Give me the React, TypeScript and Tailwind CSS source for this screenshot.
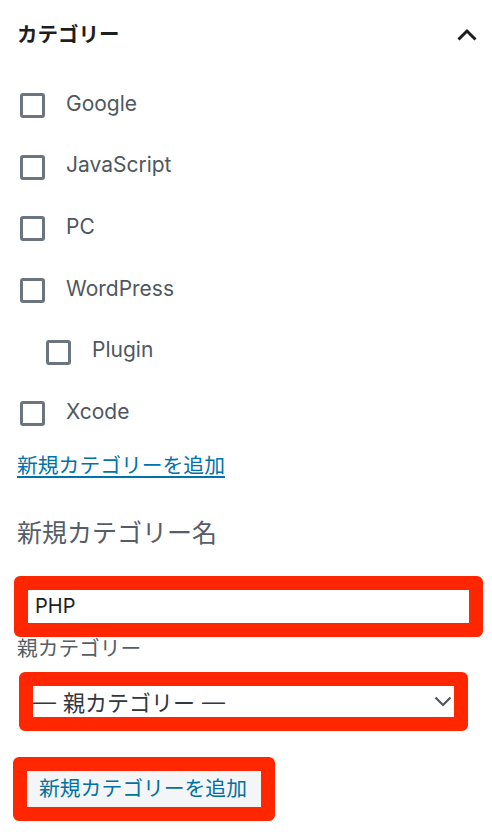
import React from 'react';

const categories = [
  { name: 'Google', child: false },
  { name: 'JavaScript', child: false },
  { name: 'PC', child: false },
  { name: 'WordPress', child: false },
  { name: 'Plugin', child: true },
  { name: 'Xcode', child: false },
];

const font = { fontFamily: 'Inter, "Noto Sans CJK JP", sans-serif' };
const cjk = { fontFamily: '"Noto Sans CJK JP", sans-serif' };
const dash = { fontFamily: '"Liberation Sans", sans-serif' };

export default function App() {
  return (
    <div className="w-[492px] h-[834px] bg-white overflow-hidden" style={font}>
      {/* Panel header */}
      <div className="h-[70px] flex items-center justify-between pl-[17px] pr-[14px]">
        <h2 className="text-[20.5px] leading-[28px] font-bold text-[#1e1e1e]">カテゴリー</h2>
        <svg width="22" height="14" viewBox="0 0 22 14" fill="none">
          <path d="M2.5 11.5 L11 3 L19.5 11.5" stroke="#1e1e1e" strokeWidth="3" />
        </svg>
      </div>

      {/* Category checklist */}
      <ul className="mt-[5px]">
        {categories.map((c) => (
          <li
            key={c.name}
            className={`h-[61.6px] flex items-center ${c.child ? 'pl-[46px]' : 'pl-[20px]'}`}
          >
            <span className="w-[25px] h-[25px] border-[3px] border-[#6c7480] rounded-[3px] shrink-0" />
            <span className="ml-[21px] -mt-[4px] text-[21px] leading-[28px] text-[#50575e]">{c.name}</span>
          </li>
        ))}
      </ul>

      <div className="pl-[17px]">
        <a className="block mt-[7px] text-[20.8px] leading-[28px] text-[#0073aa] underline underline-offset-[3px]">
          新規カテゴリーを追加
        </a>

        <h3 className="mt-[36px] text-[25px] leading-[34px] text-[#555d66]">新規カテゴリー名</h3>
      </div>

      {/* New category name */}
      <div className="mt-[26px] ml-[14px] w-[469px] border-[14px] border-[#ff2600] rounded-[6px]">
        <div className="h-[33px] bg-white flex items-center pl-[7px] text-[20px] text-[#1e1e1e]">PHP</div>
      </div>

      <div className="pl-[17px] text-[20.7px] leading-[24px] text-[#555d66]">親カテゴリー</div>

      {/* Parent category select */}
      <div className="mt-[11px] ml-[19px] w-[449px] border-[14px] border-[#ff2600] rounded-[6px]">
        <div className="h-[31px] bg-white flex items-center justify-between pr-[2px]">
          <span className="flex items-center gap-[7px] text-[22px] leading-[28px] text-[#32373c]" style={cjk}>
            <span className="text-[23px]" style={dash}>—</span>
            <span>親カテゴリー</span>
            <span className="text-[23px]" style={dash}>—</span>
          </span>
          <svg width="18" height="11" viewBox="0 0 18 11" fill="none">
            <path d="M1.5 1.5 L9 9 L16.5 1.5" stroke="#50575e" strokeWidth="2.2" />
          </svg>
        </div>
      </div>

      {/* Submit */}
      <div className="mt-[26px] ml-[13px] w-[262px] border-[14px] border-[#ff2600] rounded-[6px]">
        <button className="w-full h-[36px] bg-[#f3f5f6] text-left pl-[12px] text-[20.8px] leading-[28px] text-[#0071a1]">
          新規カテゴリーを追加
        </button>
      </div>
    </div>
  );
}
